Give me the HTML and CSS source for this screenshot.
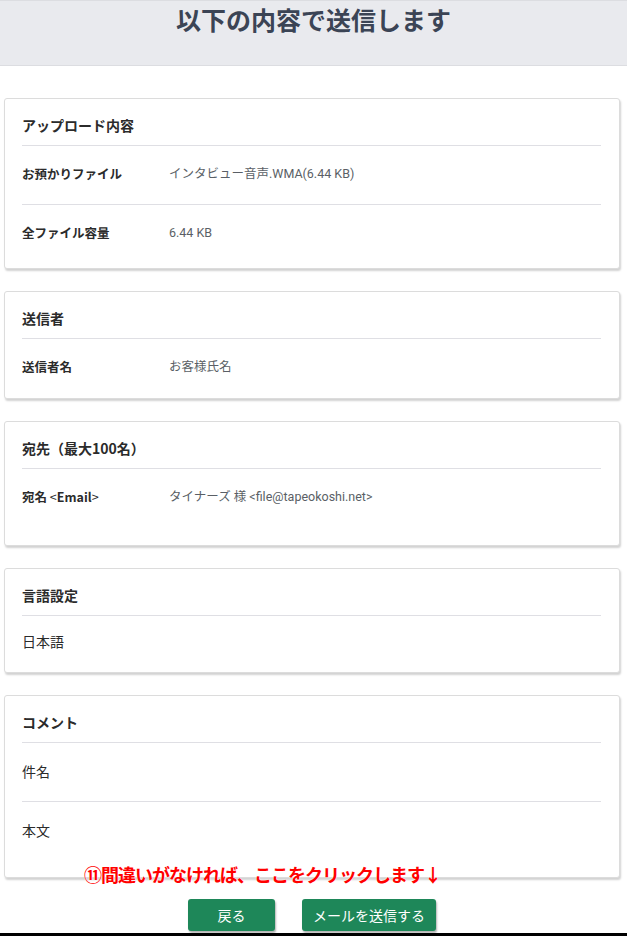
FILE: index.html
```html
<!DOCTYPE html>
<html lang="ja">
<head>
<meta charset="utf-8">
<title>以下の内容で送信します</title>
<link rel="stylesheet" href="styles.css">
</head>
<body>
<header class="page-head">
  <h1 class="page-title">以下の内容で送信します</h1>
</header>
<main class="content">
  <section class="card">
    <h2 class="card-head">アップロード内容</h2>
    <div class="row">
      <div class="label">お預かりファイル</div>
      <div class="value">インタビュー音声.WMA(6.44 KB)</div>
    </div>
    <div class="row row-end-m">
      <div class="label">全ファイル容量</div>
      <div class="value">6.44 KB</div>
    </div>
  </section>

  <section class="card">
    <h2 class="card-head">送信者</h2>
    <div class="row row-end-s">
      <div class="label">送信者名</div>
      <div class="value">お客様氏名</div>
    </div>
  </section>

  <section class="card">
    <h2 class="card-head">宛先（最大100名）</h2>
    <div class="row row-end-l">
      <div class="label">宛名 <span class="label-thin">&lt;</span>Email<span class="label-thin">&gt;</span></div>
      <div class="value">タイナーズ 様 &lt;file@tapeokoshi.net&gt;</div>
    </div>
  </section>

  <section class="card">
    <h2 class="card-head">言語設定</h2>
    <div class="row row-lang">
      <div class="plain">日本語</div>
    </div>
  </section>

  <section class="card">
    <h2 class="card-head">コメント</h2>
    <div class="row">
      <div class="plain">件名</div>
    </div>
    <div class="row row-end-l2">
      <div class="plain">本文</div>
    </div>
  </section>

  <div class="actions">
    <p class="note">⑪間違いがなければ、ここをクリックします↓</p>
    <button class="btn" type="button">戻る</button>
    <button class="btn" type="button">メールを送信する</button>
  </div>
</main>
<div class="bottom-bar"></div>
</body>
</html>
```

FILE: styles.css
```css
html, body {
  margin: 0;
  padding: 0;
  background: #ffffff;
}

body {
  font-family: Roboto, "Noto Sans CJK JP", sans-serif;
  color: #333333;
  overflow: hidden;
}

.page-head {
  background: #e9eaee;
  border-top: 1px solid #dcdde1;
  border-bottom: 1px solid #dcdde1;
  box-sizing: border-box;
  height: 66px;
}

.page-title {
  margin: 0;
  padding-top: 3px;
  text-align: center;
  font-family: "Noto Sans CJK JP", sans-serif;
  font-size: 25px;
  line-height: 30px;
  font-weight: 700;
  color: #3b4455;
}

.content {
  padding: 32px 7px 0 4px;
  display: flex;
  flex-direction: column;
  gap: 22px;
}

.card {
  border: 1px solid #dcdcdc;
  border-radius: 3px;
  box-shadow: 1px 2px 2px rgba(0, 0, 0, 0.18);
  padding: 0 18px 0 17px;
  background: #fff;
}

.card-head {
  margin: 0;
  padding: 16px 0 10px;
  font-family: "Noto Sans CJK JP", sans-serif;
  font-size: 14px;
  line-height: 20px;
  font-weight: 700;
  color: #2b2b2b;
  border-bottom: 1px solid #dfdfe4;
}

.row {
  display: flex;
  align-items: center;
  padding: 18px 0 20px;
  line-height: 20px;
  border-bottom: 1px solid #dfdfe4;
}

.row:last-child {
  border-bottom: none;
}

.row-end-s { padding-bottom: 21px; }
.row-end-m { padding-bottom: 25px; }
.row-end-l { padding-bottom: 38px; }
.row-end-l2 { padding-bottom: 37px; }
.row-lang { padding-top: 15px; padding-bottom: 21px; }

.label {
  width: 147px;
  flex: none;
  font-family: "Noto Sans CJK JP", sans-serif;
  font-size: 12.5px;
  font-weight: 700;
  color: #2b2b2b;
}

.label-thin {
  font-weight: 400;
}

.value {
  font-size: 12.5px;
  color: #5a5f66;
}

.plain {
  font-family: "Noto Sans CJK JP", sans-serif;
  font-size: 14px;
  color: #2b2b2b;
}

.actions {
  position: relative;
  display: flex;
  justify-content: center;
  align-items: flex-start;
  gap: 27px;
  margin-top: -1px;
  height: 33px;
}

.note {
  position: absolute;
  left: 80px;
  top: -37px;
  margin: 0;
  font-family: "Noto Sans CJK JP", sans-serif;
  font-size: 18px;
  line-height: 24px;
  font-weight: 700;
  color: #ff0000;
  letter-spacing: -1px;
  white-space: nowrap;
  text-shadow: 0 0 1px #fff, 0 0 1px #fff;
}

.btn {
  height: 32px;
  min-width: 87px;
  padding: 0 11px;
  border: none;
  border-radius: 3px;
  background: #1e8759;
  color: #ffffff;
  font-family: "Noto Sans CJK JP", sans-serif;
  font-size: 14px;
  box-shadow: 1px 2px 2px rgba(0, 0, 0, 0.3);
}

.bottom-bar {
  height: 10px;
  margin-top: 1px;
  background: #000000;
}
```
